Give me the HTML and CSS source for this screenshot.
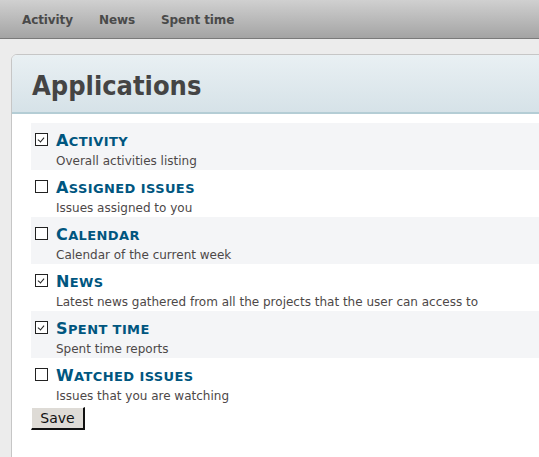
FILE: index.html
```html
<!DOCTYPE html>
<html>
<head>
<meta charset="utf-8">
<link rel="stylesheet" href="styles.css">
</head>
<body>
<div class="topbar">
  <a class="nav-item">Activity</a>
  <a class="nav-item">News</a>
  <a class="nav-item">Spent time</a>
</div>
<div class="panel">
  <div class="panel-header"><h1>Applications</h1></div>
  <div class="panel-body">
    <div class="app-row shaded">
      <span class="cb checked"></span>
      <div class="app-text"><div class="app-title"><span class="sc">A</span>ctivity</div><div class="app-desc">Overall activities listing</div></div>
    </div>
    <div class="app-row">
      <span class="cb"></span>
      <div class="app-text"><div class="app-title"><span class="sc">A</span>ssigned issues</div><div class="app-desc">Issues assigned to you</div></div>
    </div>
    <div class="app-row shaded">
      <span class="cb"></span>
      <div class="app-text"><div class="app-title"><span class="sc">C</span>alendar</div><div class="app-desc">Calendar of the current week</div></div>
    </div>
    <div class="app-row">
      <span class="cb checked"></span>
      <div class="app-text"><div class="app-title"><span class="sc">N</span>ews</div><div class="app-desc">Latest news gathered from all the projects that the user can access to</div></div>
    </div>
    <div class="app-row shaded">
      <span class="cb checked"></span>
      <div class="app-text"><div class="app-title"><span class="sc">S</span>pent time</div><div class="app-desc">Spent time reports</div></div>
    </div>
    <div class="app-row">
      <span class="cb"></span>
      <div class="app-text"><div class="app-title"><span class="sc">W</span>atched issues</div><div class="app-desc">Issues that you are watching</div></div>
    </div>
    <button class="save-btn">Save</button>
  </div>
</div>
</body>
</html>
```
FILE: styles.css
```css
html, body {
  margin: 0;
  padding: 0;
  overflow: hidden;
}
body {
  width: 539px;
  height: 457px;
  background: #ececec;
  font-family: "DejaVu Sans", Verdana, sans-serif;
}
.topbar {
  height: 38px;
  background: linear-gradient(#d0d0d0, #a4a4a4);
  border-bottom: 1px solid #7a7a7a;
  display: flex;
  align-items: center;
  padding-left: 22px;
  gap: 26px;
}
.nav-item {
  font-size: 12px;
  font-weight: bold;
  color: #4a4a4a;
  letter-spacing: -0.1px;
  padding-top: 2px;
}
.panel {
  margin: 15px 0 0 11px;
  width: 580px;
  height: 420px;
  border: 1px solid #c6c6c6;
  border-radius: 6px 0 0 0;
  background: #fff;
  overflow: hidden;
}
.panel-header {
  height: 57px;
  background: linear-gradient(#e9f0f3, #d6e2e8);
  border-bottom: 2px solid #b4cdd5;
  display: flex;
  align-items: center;
  padding-left: 20px;
}
.panel-header h1 {
  margin: 0;
  font-family: "DejaVu Sans Condensed", "DejaVu Sans", sans-serif;
  font-stretch: condensed;
  font-size: 27px;
  font-weight: bold;
  color: #444;
  padding-top: 3px;
}
.panel-body {
  padding: 9px 0 0 19px;
}
.app-row {
  height: 47px;
  display: flex;
  align-items: flex-start;
}
.app-row.shaded {
  background: #f4f5f7;
}
.cb {
  width: 11px;
  height: 11px;
  border: 1px solid #222;
  background: #fff;
  margin: 10px 0 0 4px;
  position: relative;
}
.cb.checked::after {
  content: "";
  position: absolute;
  left: 3px;
  top: 2px;
  width: 3px;
  height: 5px;
  border-right: 1px solid #222;
  border-bottom: 1px solid #222;
  transform: rotate(40deg);
}
.app-text {
  margin-left: 8px;
  padding-top: 7px;
}
.app-title {
  font-size: 13px;
  font-weight: bold;
  text-transform: uppercase;
  color: #00567f;
  line-height: 22px;
  letter-spacing: 0.4px;
}
.app-title .sc {
  font-size: 16px;
}
.app-desc {
  font-size: 12px;
  color: #4d4848;
  line-height: 14px;
  margin-top: 1px;
}
.save-btn {
  margin-top: 2px;
  width: 54px;
  height: 23px;
  background: #dedbd6;
  border: none;
  border-top: 1px solid #fff;
  border-left: 1px solid #fff;
  border-right: 2px solid #111;
  border-bottom: 2px solid #111;
  font-family: "DejaVu Sans", Verdana, sans-serif;
  font-size: 14px;
  color: #111;
  padding: 0;
}
```
